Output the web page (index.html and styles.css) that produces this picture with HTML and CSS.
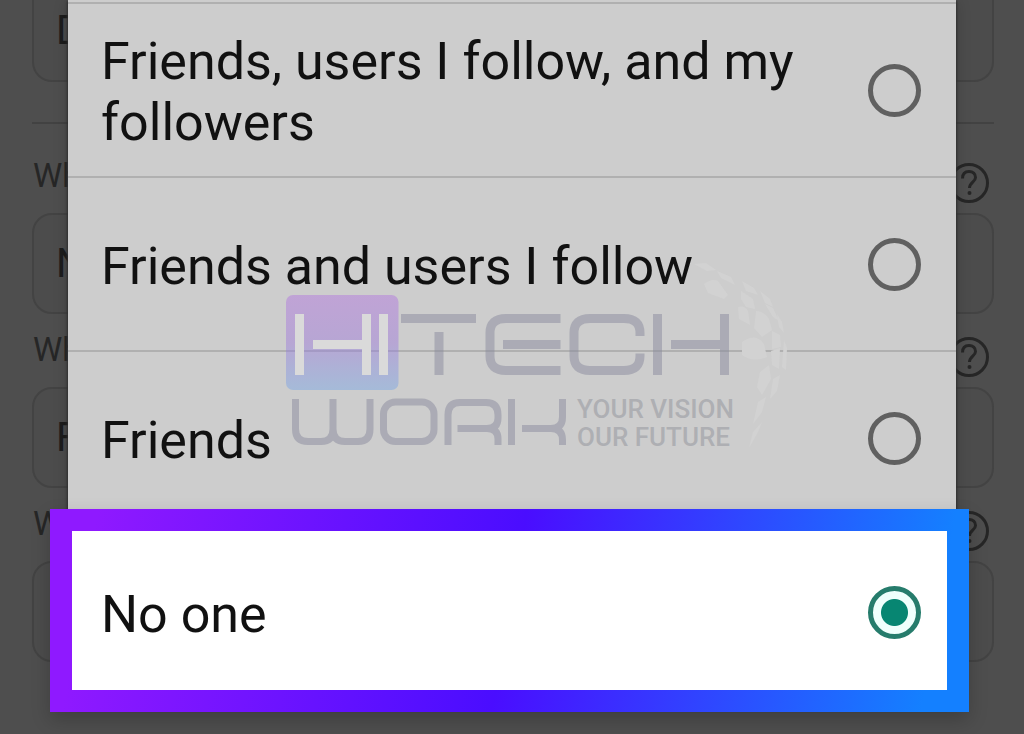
FILE: index.html
```html
<!DOCTYPE html>
<html lang="en">
<head>
<meta charset="utf-8">
<meta name="viewport" content="width=device-width, initial-scale=1">
<title>Privacy settings</title>
<link rel="stylesheet" href="styles.css">
</head>
<body>
<svg class="symbols" aria-hidden="true">
  <symbol id="help" viewBox="0 0 40 40">
    <circle cx="20" cy="20" r="18.5" fill="none" stroke="currentColor" stroke-width="3"/>
    <path d="M13.5 15.5C13.5 11 16 8.500 20 8.500S26.500 11 26.500 14.500C26.500 19 20.500 19.500 20.500 25" fill="none" stroke="currentColor" stroke-width="3"/>
    <circle cx="20.500" cy="30" r="2" fill="currentColor"/>
  </symbol>
</svg>
<main class="settings">
  <button class="field field-first" type="button">D</button>
  <hr class="divider">
  <section class="group">
    <div class="group-head"><span>Wh</span><svg class="help"><use href="#help"/></svg></div>
    <button class="field" type="button">N</button>
  </section>
  <section class="group">
    <div class="group-head"><span>Wh</span><svg class="help"><use href="#help"/></svg></div>
    <button class="field" type="button">F</button>
  </section>
  <section class="group">
    <div class="group-head"><span>W</span><svg class="help"><use href="#help"/></svg></div>
    <button class="field" type="button" aria-label="Field"></button>
  </section>
</main>

<form class="dialog">
  <label class="option">
    <span class="option-text">Friends, users I follow, and my followers</span>
    <input class="radio" type="radio" name="audience">
  </label>
  <label class="option">
    <span class="option-text">Friends and users I follow</span>
    <input class="radio" type="radio" name="audience">
  </label>
  <label class="option">
    <span class="option-text">Friends</span>
    <input class="radio" type="radio" name="audience">
  </label>
  <label class="option option-selected">
    <span class="option-text">No one</span>
    <input class="radio" type="radio" name="audience" checked>
  </label>
</form>

<svg class="watermark" viewBox="280 250 520 210" role="img" aria-label="HiTech Work">
  <defs>
    <linearGradient id="tile" x1="0" y1="0" x2="0" y2="1">
      <stop offset="0" stop-color="#b070e0"/>
      <stop offset=".5" stop-color="#9c76dc"/>
      <stop offset="1" stop-color="#74a4e6"/>
    </linearGradient>
  </defs>
  <g class="globe">
    <path d="M694 264l12-1 10 7-9 1zM717 271l14 6 4 8-14-7zM704 284q8-6 14-3l10 14-4 4-16-6zM742 281l12 7 4 7-12-4zM741 291l12 8 2 10-9-2-5-8zM760 291l10 8 3 8-8-4zM738 307q7-2 10 4l2 14-11-6zM756 311q8 0 13 8l3 11-10 7-8-9zM765 304l8 4 6 13-6-4zM777 314l5 8 2 11-5-6zM772 331l8 4 1 12-9 2zM742 342q14-10 22 2l3 13q-14 6-25-2zM771 351l9-3-1 21-7-4zM784 340l3 8-1 22-4-3zM760 372l9-7 2 14-9 16-5-8zM773 379l7-4-3 16-7 8zM758 402l8-5-4 15-9 12zM753 432l9-10-4 10-9 16z"/>
  </g>
  <rect class="tile" x="286" y="295" width="112.500" height="95" rx="7" fill="url(#tile)"/>
  <g class="mark-light">
    <path d="M299.500 314v61M313 344.500h54M366.500 314v61M383.500 314v61"/>
  </g>
  <g class="mark">
    <path d="M401 318.500h75M439 332v43"/>
    <path d="M560.500 318.500H506Q490 318.500 490 333V356Q490 370.500 506 370.500H560.500M503 344.500h57.500"/>
    <path d="M640 336v-3Q640 318.500 624 318.500H590Q574 318.500 574 333V356Q574 370.500 590 370.500H624Q640 370.500 640 356v-2.500"/>
    <path d="M657.500 314v61M671 344.500h53.500M724.500 314v61"/>
  </g>
  <g class="mark mark-small">
    <path d="M295.500 399V429Q295.500 441.500 308 441.500H321Q333 441.500 333 429V399M333 429Q333 441.500 345 441.500H358Q370 441.500 370 429V399"/>
    <rect x="383.500" y="402" width="50.500" height="39.500" rx="12"/>
    <path d="M448 445V415Q448 402.500 460 402.500H486Q498 402.500 498 415V418Q498 428.500 487 428.500H457.500M487 428.500Q498 428.500 498 439V445"/>
    <path d="M511.500 399v46M522 428.500H551Q562.500 428.500 562.500 417V399M551 428.500Q562.500 428.500 562.500 440V445"/>
  </g>
  <g class="tagline">
    <text x="577" y="418">YOUR VISION</text>
    <text x="577" y="446">OUR FUTURE</text>
  </g>
</svg>
</body>
</html>
```

FILE: styles.css
```css
* { box-sizing: border-box; }

body {
  position: relative;
  margin: 0;
  min-height: 100vh;
  overflow: hidden;
  background: #4e4e4e;
  color: #262626;
  font-family: Roboto, "Liberation Sans", sans-serif;
}

.symbols { display: none; }

.settings {
  display: flex;
  flex-direction: column;
  padding: 0 30px 0 32px;
}

.field {
  display: block;
  width: 100%;
  height: 101px;
  padding: 0 22px;
  border: 2px solid #434343;
  border-radius: 20px;
  background: #4c4c4c;
  color: #1c1c1c;
  font: 40px Roboto, "Liberation Sans", sans-serif;
  text-align: left;
}

.field-first {
  height: 82px;
  padding-bottom: 20px;
  border-top: 0;
  border-radius: 0 0 20px 20px;
}

.divider {
  width: 100%;
  height: 2px;
  margin: 40px 0 16px;
  border: 0;
  background: #424242;
}

.group-head {
  display: flex;
  align-items: flex-start;
  justify-content: space-between;
  height: 73px;
  padding: 23px 5px 0 1px;
  font-size: 33px;
  line-height: 26px;
}

.help { width: 40px; height: 40px; }

.dialog {
  position: absolute;
  top: 2px;
  left: 68px;
  right: 68px;
  background: #cdcdcd;
  box-shadow: 0 -2px 0 #cdcdcd, 0 0 2px 1px #303030, 0 0 14px rgba(0, 0, 0, .2);
}

.option {
  display: flex;
  align-items: center;
  justify-content: space-between;
  gap: 24px;
  min-height: 174px;
  padding: 0 35px 0 33px;
  border-top: 2px solid #b0b0b0;
  color: #111;
  font-size: 52px;
  line-height: 61px;
}

.option-text { padding-top: 4px; }

.radio {
  flex: none;
  width: 53px;
  height: 53px;
  margin: 0;
  border: 5px solid #606060;
  border-radius: 50%;
  appearance: none;
}

.radio:checked {
  border-color: #267c6c;
  background: radial-gradient(circle, #078672 13px, #effffc 14px);
}

.option-selected {
  position: relative;
  z-index: 0;
  border-top-color: transparent;
}

.option-selected::before {
  content: "";
  position: absolute;
  z-index: -1;
  inset: -17px -13px -14px -18px;
  border: 22px solid transparent;
  background:
    linear-gradient(#fff, #fff) padding-box,
    linear-gradient(100deg, #8f19ff 5%, #4a0dff 50%, #1480ff 95%) border-box;
  box-shadow: 0 8px 18px rgba(0, 0, 0, .2);
}

.watermark {
  position: absolute;
  top: 250px;
  left: calc(50% - 232px);
  width: 520px;
  height: 210px;
  pointer-events: none;
}

.globe { fill: #d2d2d2; }
.tile { opacity: .45; }
.mark, .mark-light { fill: none; stroke-width: 9px; }
.mark { stroke: #8a8b9e; opacity: .5; }
.mark-light { stroke: #dadada; }
.mark-small { stroke-width: 7px; }
.tagline {
  fill: #aeafb3;
  font-family: Roboto, "Liberation Sans", sans-serif;
  font-size: 26px;
  font-weight: 500;
}
```
